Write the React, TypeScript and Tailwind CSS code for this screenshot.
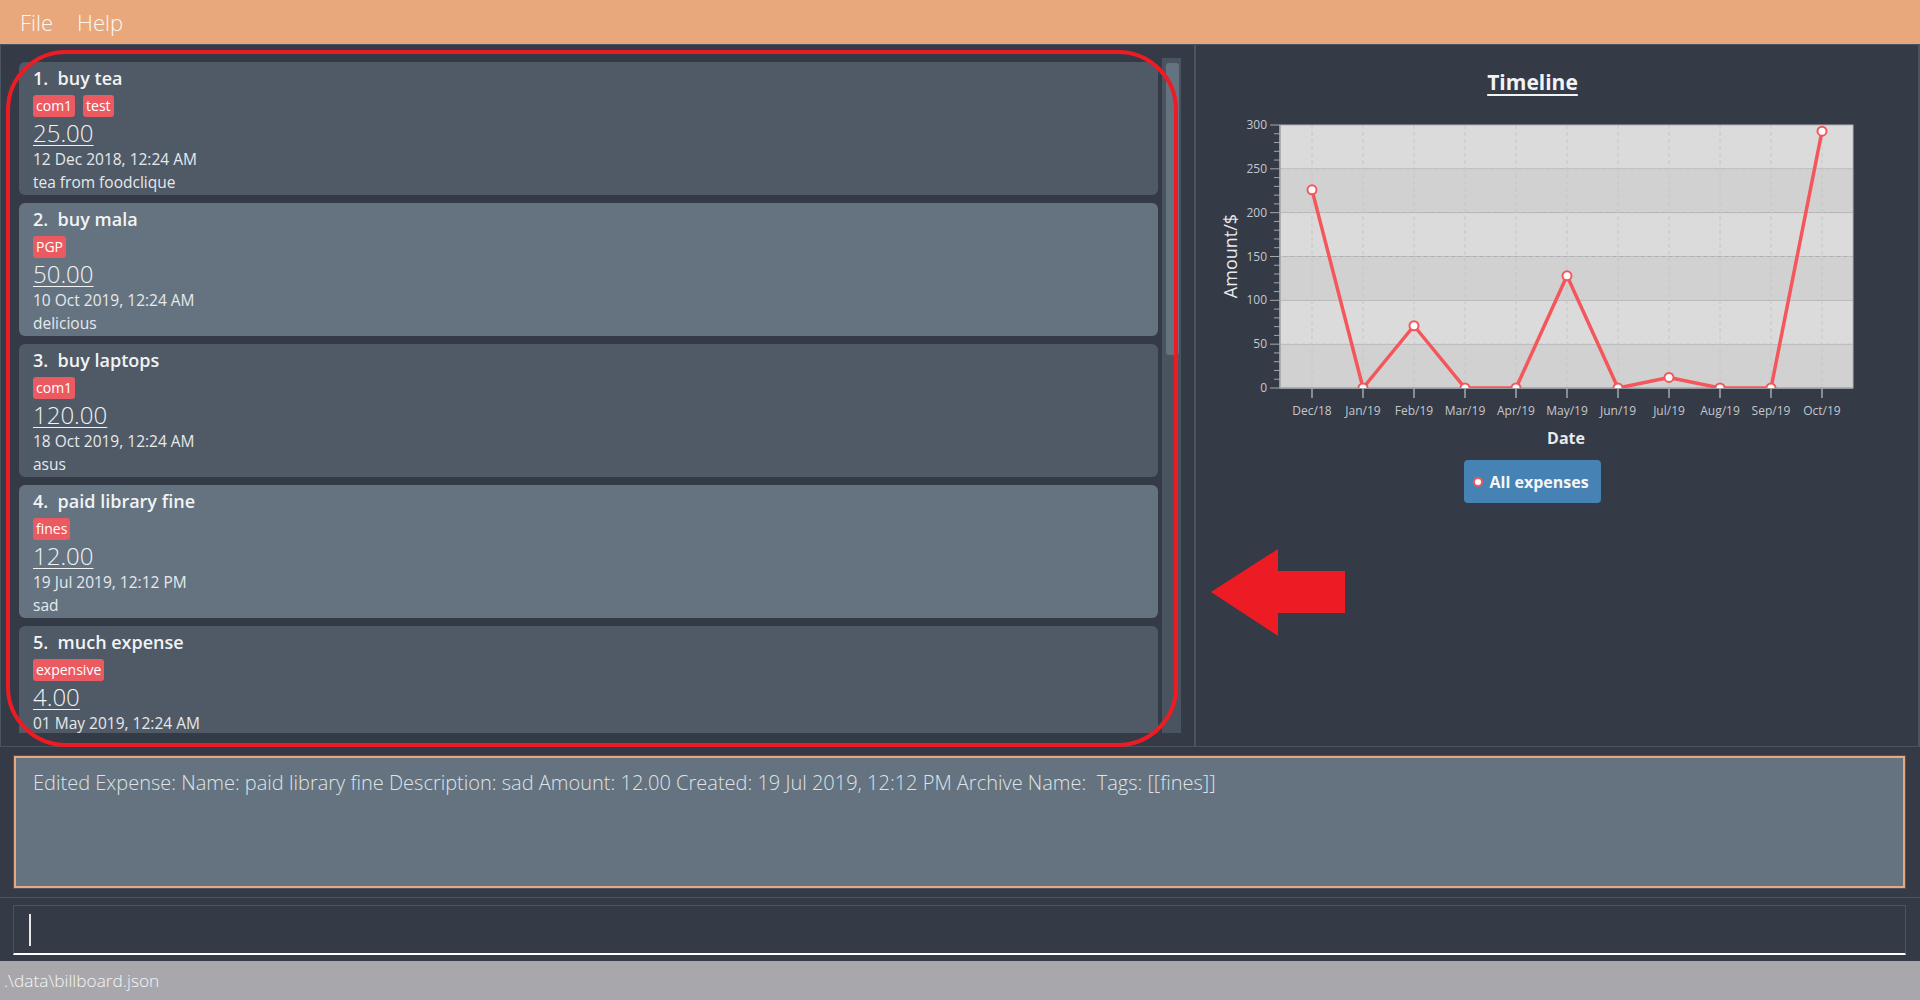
import React from "react";

type Expense = {
  name: string;
  tags: string[];
  amount: string;
  created: string;
  description: string;
};

const expenses: Expense[] = [
  { name: "buy tea", tags: ["com1", "test"], amount: "25.00", created: "12 Dec 2018, 12:24 AM", description: "tea from foodclique" },
  { name: "buy mala", tags: ["PGP"], amount: "50.00", created: "10 Oct 2019, 12:24 AM", description: "delicious" },
  { name: "buy laptops", tags: ["com1"], amount: "120.00", created: "18 Oct 2019, 12:24 AM", description: "asus" },
  { name: "paid library fine", tags: ["fines"], amount: "12.00", created: "19 Jul 2019, 12:12 PM", description: "sad" },
  { name: "much expense", tags: ["expensive"], amount: "4.00", created: "01 May 2019, 12:24 AM", description: "so much" },
];

const months = ["Dec/18", "Jan/19", "Feb/19", "Mar/19", "Apr/19", "May/19", "Jun/19", "Jul/19", "Aug/19", "Sep/19", "Oct/19"];
const values = [226, 0, 71, 0, 0, 128, 0, 12, 0, 0, 293];

// plot area in page coordinates
const PL = 1282;
const PR = 1855;
const PT = 124;
const PB = 387;
const yOf = (v: number) => PB - (v * (PB - PT)) / 300;
const xOf = (i: number) => 1314 + i * 51;

function ExpenseCard({ index, expense }: { index: number; expense: Expense }) {
  const bg = index % 2 === 0 ? "bg-[#4f5a66]" : "bg-[#657380]";
  return (
    <div className={`${bg} h-[133px] shrink-0 rounded-[6px] pl-[14px] pt-[4px]`}>
      <div className="text-[18px] leading-[25px] font-semibold text-[#f1f3f5] whitespace-pre">
        {index + 1}.{"  "}{expense.name}
      </div>
      <div className="flex gap-[8px] mt-[4px]">
        {expense.tags.map((t) => (
          <span key={t} className="h-[22px] px-[3px] rounded-[3px] bg-[#eb5a60] text-white text-[14px] leading-[22px]">
            {t}
          </span>
        ))}
      </div>
      <div className="text-[24px] leading-[31px] font-light text-[#f1f3f5] underline underline-offset-[3px] decoration-1">
        {expense.amount}
      </div>
      <div className="text-[15.5px] leading-[23px] text-[#e6e9ec]">{expense.created}</div>
      <div className="text-[15.5px] leading-[23px] text-[#e6e9ec]">{expense.description}</div>
    </div>
  );
}

function TimelineChart() {
  const bands = [0, 1, 2, 3, 4, 5];
  const ticks = [];
  for (let v = 0; v <= 300; v += 10) ticks.push(v);
  const points = values.map((v, i) => `${xOf(i)},${yOf(v)}`).join(" ");
  return (
    <svg width="644" height="345" viewBox="1212 110 644 345" className="block">
      <defs>
        <clipPath id="plot">
          <rect x={PL} y={PT} width={PR - PL} height={PB - PT} />
        </clipPath>
      </defs>
      {bands.map((b) => (
        <rect
          key={b}
          x={PL}
          y={PT + (b * (PB - PT)) / 6}
          width={PR - PL}
          height={(PB - PT) / 6}
          fill={b % 2 === 0 ? "#dbdbdb" : "#d1d1d1"}
        />
      ))}
      {[50, 100, 150, 200, 250].map((v) => (
        <line key={v} x1={PL} x2={PR} y1={yOf(v)} y2={yOf(v)} stroke="#c0c0c0" strokeWidth="1" strokeDasharray="4 3" />
      ))}
      {months.map((m, i) => (
        <line key={m} x1={xOf(i)} x2={xOf(i)} y1={PT} y2={PB} stroke="#c6c6c6" strokeWidth="1" strokeDasharray="4 3" />
      ))}
      <rect x={PL} y={PT} width={PR - PL} height={PB - PT} fill="none" stroke="#b4b4b4" strokeWidth="1" />

      {/* y axis */}
      {ticks.map((v) => (
        <line
          key={v}
          x1={v % 50 === 0 ? PL - 10 : PL - 6}
          x2={PL}
          y1={yOf(v)}
          y2={yOf(v)}
          stroke="#a3a7ad"
          strokeWidth="1"
        />
      ))}
      {[0, 50, 100, 150, 200, 250, 300].map((v) => (
        <text key={v} x={PL - 13} y={yOf(v) + 4} textAnchor="end" fontSize="12" fill="#c4c8cd" fontFamily="'Open Sans', sans-serif">
          {v}
        </text>
      ))}
      <line x1={PL} x2={PL} y1={PT} y2={PB} stroke="#a3a7ad" strokeWidth="1.5" />

      {/* x axis */}
      <line x1={PL} x2={PR} y1={PB} y2={PB} stroke="#a3a7ad" strokeWidth="1.5" />
      {months.map((m, i) => (
        <g key={m}>
          <line x1={xOf(i)} x2={xOf(i)} y1={PB} y2={PB + 10} stroke="#a3a7ad" strokeWidth="1.5" />
          <text x={xOf(i)} y={414} textAnchor="middle" fontSize="12" fill="#c4c8cd" fontFamily="'Open Sans', sans-serif">
            {m}
          </text>
        </g>
      ))}

      <text
        x={1234}
        y={255}
        transform="rotate(-90 1234 255)"
        textAnchor="middle"
        dominantBaseline="middle"
        fontSize="18"
        fill="#e8eaed"
        fontFamily="'Open Sans', sans-serif"
      >
        Amount/$
      </text>
      <text x={1568} y={443} textAnchor="middle" fontSize="16" fontWeight="700" fill="#e8eaed" fontFamily="'Open Sans', sans-serif">
        Date
      </text>

      <g clipPath="url(#plot)">
        <polyline points={points} fill="none" stroke="#f4575b" strokeWidth="3.5" strokeLinejoin="round" />
        {values.map((v, i) => (
          <circle key={i} cx={xOf(i)} cy={yOf(v)} r="4.5" fill="#ffffff" stroke="#f4575b" strokeWidth="2" />
        ))}
      </g>
    </svg>
  );
}

export default function App() {
  return (
    <div className="relative w-[1920px] h-[1000px] overflow-hidden flex flex-col bg-[#343a46] font-['Open_Sans',sans-serif]">
      {/* menu bar */}
      <div className="h-[44px] shrink-0 bg-[#e8a87c] flex items-center gap-[24px] pl-[20px] text-[22px] font-light text-[#fdf7f2]">
        <span>File</span>
        <span>Help</span>
      </div>

      {/* main area */}
      <div className="h-[702px] shrink-0 flex border-t border-[#4a5360]">
        <div className="w-[1194px] shrink-0 border-l border-[#4a5360] pt-[13px] pl-[11px] pr-[13px]">
          <div className="h-[675px] flex">
            <div className="flex-1 overflow-hidden flex flex-col gap-[8px] pt-[4px] pl-[7px] pr-[4px]">
              {expenses.map((e, i) => (
                <ExpenseCard key={i} index={i} expense={e} />
              ))}
            </div>
            <div className="w-[19px] shrink-0 bg-[#4a5360] pt-[5px] pl-[4px] pr-[2px]">
              <div className="h-[292px] rounded-[3px] bg-[#657380]" />
            </div>
          </div>
        </div>
        <div className="w-[2px] shrink-0 bg-[#4a5360]" />
        <div className="flex-1 border-r-2 border-[#4a5360] pl-[14px] pt-[24px]">
          <div className="w-[644px] flex flex-col items-center">
            <div className="text-[21px] leading-[26px] font-bold text-[#f1f3f5] underline underline-offset-[4px] decoration-2 pl-[1px]">
              Timeline
            </div>
            <div className="mt-[16px]">
              <TimelineChart />
            </div>
            <div className="mt-[4px] h-[43px] w-[137px] rounded-[4px] bg-[#4682b4] flex items-center pl-[9px] gap-[7px]">
              <span className="w-[10px] h-[10px] rounded-full bg-white border-2 border-[#f4575b]" />
              <span className="text-[16px] font-bold text-[#f3f5f7]">All expenses</span>
            </div>
          </div>
        </div>
      </div>

      {/* result display */}
      <div className="h-[151px] shrink-0 border-t border-[#4a5360] pt-[8px] pl-[13px] pr-[14px]">
        <div className="h-[134px] border border-[#4a5360]">
          <div className="h-full border-2 border-[#e8a87c] bg-[#657380] pl-[17px] pt-[10px] text-[20px] font-light text-[#dfe3e8] whitespace-pre">
            Edited Expense: Name: paid library fine Description: sad Amount: 12.00 Created: 19 Jul 2019, 12:12 PM Archive Name:  Tags: [[fines]]
          </div>
        </div>
      </div>

      {/* command box */}
      <div className="h-[64px] shrink-0 border-t border-[#4a5360] pt-[7px] pl-[13px] pr-[14px]">
        <div className="h-[50px] border border-[#4a5360] border-b-2 border-b-white flex items-center pl-[15px]">
          <div className="w-[2px] h-[32px] bg-[#e8e8e8]" />
        </div>
      </div>

      {/* status bar */}
      <div className="flex-1 bg-[#a8a8ac] flex items-center pl-[4px] text-[17.3px] font-light text-[#f4f4f6]">
        .\data\billboard.json
      </div>

      {/* annotation overlay */}
      <div className="absolute left-[6px] top-[50px] w-[1172px] h-[697px] rounded-[60px] border-4 border-[#ed1c24] pointer-events-none" />
      <svg className="absolute left-0 top-0 pointer-events-none" width="1920" height="1000">
        <polygon points="1211,592 1278,549 1278,571 1345,571 1345,613 1278,613 1278,636" fill="#ed1c24" />
      </svg>
    </div>
  );
}
